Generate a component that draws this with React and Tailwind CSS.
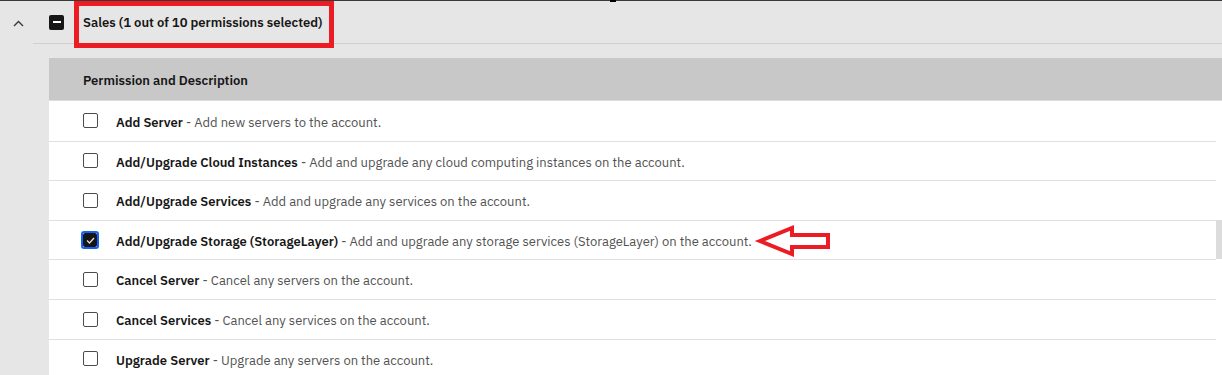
const rows = [
  { name: 'Add Server', desc: 'Add new servers to the account.' },
  { name: 'Add/Upgrade Cloud Instances', desc: 'Add and upgrade any cloud computing instances on the account.' },
  { name: 'Add/Upgrade Services', desc: 'Add and upgrade any services on the account.' },
  { name: 'Add/Upgrade Storage (StorageLayer)', desc: 'Add and upgrade any storage services (StorageLayer) on the account.', checked: true },
  { name: 'Cancel Server', desc: 'Cancel any servers on the account.' },
  { name: 'Cancel Services', desc: 'Cancel any services on the account.' },
  { name: 'Upgrade Server', desc: 'Upgrade any servers on the account.' },
];

function Checkbox({ checked }) {
  if (checked) {
    return (
      <span className="w-[18px] h-[18px] rounded-[3px] border-2 border-[#0f62fe] flex items-center justify-center">
        <span className="w-[14px] h-[14px] rounded-[2px] bg-[#161616] flex items-center justify-center">
          <svg width="9" height="7" viewBox="0 0 9 7" fill="none">
            <path d="M1 3.5 L3.5 6 L8 1" stroke="#e0e0e0" strokeWidth="1.3" />
          </svg>
        </span>
      </span>
    );
  }
  return (
    <span className="w-[18px] h-[18px] flex items-center justify-center">
      <span className="w-[15px] h-[15px] rounded-[2px] border-[1.5px] border-[#4c4c4c] bg-white" />
    </span>
  );
}

export default function App() {
  return (
    <div className="relative w-[1222px] h-[375px] overflow-hidden bg-[#e6e6e6] font-['IBM_Plex_Sans','Noto_Sans',sans-serif] text-[13px]">
      {/* top edge */}
      <div className="h-px bg-[#393939] flex">
        <span className="ml-[610px] w-[6px] h-[2px] bg-black" />
      </div>

      {/* group header */}
      <div className="flex h-[43px]">
        <div className="w-[33px] flex items-center pl-[13px] pt-[2px]">
          <svg width="11" height="7" viewBox="0 0 11 7" fill="none">
            <path d="M1 6 L5.5 1.5 L10 6" stroke="#393939" strokeWidth="1.4" />
          </svg>
        </div>
        <div className="flex-1 flex items-center border-b border-[#d0d0d0] pl-[16px]">
          <span className="w-[15px] h-[15px] rounded-[2px] bg-[#161616] flex items-center justify-center">
            <span className="w-[8px] h-[2px] bg-white" />
          </span>
          <span className="ml-[19px] pt-[2px] font-semibold text-[#161616]">Sales (1 out of 10 permissions selected)</span>
        </div>
      </div>

      {/* permissions table */}
      <div className="ml-[49px] mt-[14px] bg-white">
        <div className="h-[43px] bg-[#c8c8c8] border-b border-[#dcdcdc] flex items-center pl-[34px] pt-[3px] font-semibold text-[#161616]">
          Permission and Description
        </div>
        <div className="flex">
          <div className="flex-1">
            {rows.map((r, i) => (
              <div
                key={r.name}
                className={`h-[39.6px] flex items-center pl-[32px] ${i > 0 ? 'border-t border-[#e0e0e0]' : ''}`}
              >
                <Checkbox checked={r.checked} />
                <span className="ml-[17px] pt-[3px] whitespace-nowrap">
                  <span className="font-semibold text-[#161616]">{r.name}</span>
                  <span className="text-[#525252]"> - {r.desc}</span>
                </span>
              </div>
            ))}
          </div>
          <div className="w-[6px] flex flex-col">
            <div className="mt-[119px] h-[39px] bg-[#dcdcdc]" />
          </div>
        </div>
      </div>

      {/* annotations */}
      <div className="absolute left-[74px] top-px w-[260px] h-[47px] border-[5px] border-[#ec1c24]" />
      <svg className="absolute left-[754px] top-[222px]" width="80" height="38" viewBox="754 222 80 38">
        <polygon
          points="760,241 792,228 792,235 828,235 828,247 792,247 792,254"
          fill="none"
          stroke="#ec1c24"
          strokeWidth="4"
          strokeLinejoin="miter"
        />
      </svg>
    </div>
  );
}
